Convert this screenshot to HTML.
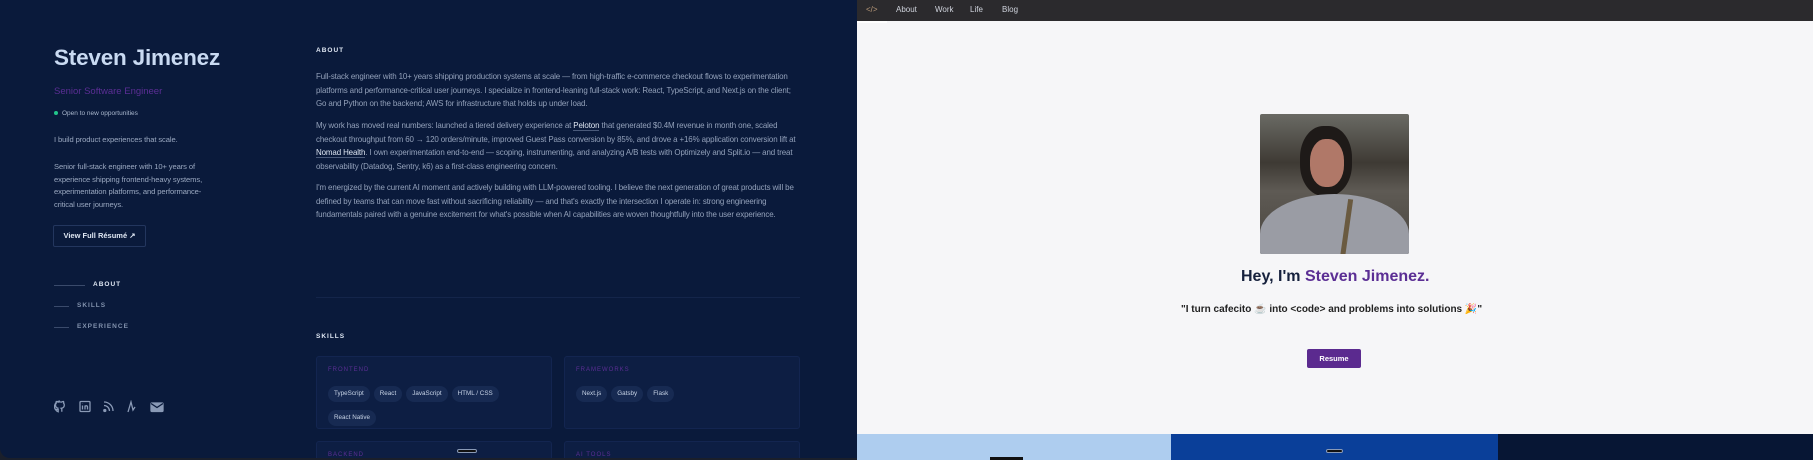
<!DOCTYPE html>
<html><head><meta charset="utf-8"><style>
*{margin:0;padding:0;box-sizing:border-box}
body{width:1813px;height:460px;overflow:hidden;background:#1a1f2b;font-family:"Liberation Sans",sans-serif;position:relative}
.l{position:absolute;left:0;top:0;width:857px;height:458px;background:#0a1a3b;border-bottom-left-radius:10px;overflow:hidden}
.a{position:absolute;white-space:nowrap}
.name{left:54px;top:45px;font-size:22.5px;font-weight:bold;color:#c9daf2;letter-spacing:-0.2px}
.sub{left:54px;top:86px;font-size:9.5px;color:#5b2e94}
.open{left:54px;top:110px;font-size:6.5px;color:#a8b6cc}
.open i{display:inline-block;width:4px;height:4px;border-radius:50%;background:#22c58b;margin-right:4px;vertical-align:middle}
.t{color:#9aa8c0;font-size:7.6px;letter-spacing:-0.1px}
.btn{left:53px;top:225px;width:93px;height:22px;border:1px solid #23365e;border-radius:2px;color:#dfe7f3;font-size:7.5px;font-weight:bold;text-align:center;line-height:20px}
.nav{font-size:6.5px;font-weight:bold;letter-spacing:1px;color:#8292ad}
.ln{position:absolute;height:1px;background:#3a4a6b}
.h{font-size:6.5px;font-weight:bold;letter-spacing:1px;color:#dfe7f3}
.p{left:316px;white-space:nowrap;font-size:7.95px;line-height:13.6px;color:#93a1ba;letter-spacing:-0.12px}
.p b{color:#dfe7f3;font-weight:normal;border-bottom:1px solid #4a5a7a}
.card{position:absolute;background:#0d1e43;border:1px solid #132550;border-radius:3px}
.lab{position:absolute;left:11px;top:10px;font-size:6px;letter-spacing:1px;color:#5b2e94}
.pill{display:inline-block;height:16px;line-height:16px;padding:0 6px;border-radius:8px;background:#172a52;color:#c7d3e6;font-size:6.3px;margin:0 4px 4px 0}
.pills{position:absolute;left:11px;top:25px;width:220px}
.r{position:absolute;left:857px;top:0;width:956px;height:434px;background:#f6f6f8}
.bar{position:absolute;left:857px;top:0;width:956px;height:21px;background:#2b2a2d}
.bar span{position:absolute;top:5px;font-size:8px;color:#cfd3dc}
</style></head><body>
<div class="l">
<div class="a name">Steven Jimenez</div>
<div class="a sub">Senior Software Engineer</div>
<div class="a open"><i></i>Open to new opportunities</div>
<div class="a t" style="left:54px;top:135px">I build product experiences that scale.</div>
<div class="a t" style="left:54px;top:161px;line-height:12.7px;white-space:normal;width:160px">Senior full-stack engineer with 10+ years of experience shipping frontend-heavy systems, experimentation platforms, and performance-critical user journeys.</div>
<div class="a btn">View Full Résumé ↗</div>
<div class="ln" style="left:54px;top:285px;width:31px"></div><div class="a nav" style="left:93px;top:281px;color:#dfe7f3">ABOUT</div>
<div class="ln" style="left:54px;top:306px;width:15px"></div><div class="a nav" style="left:77px;top:302px">SKILLS</div>
<div class="ln" style="left:54px;top:327px;width:15px"></div><div class="a nav" style="left:77px;top:323px">EXPERIENCE</div>
<svg class="a" style="left:54px;top:400px" width="115" height="14" viewBox="0 0 115 14" fill="none" stroke="#8a9ab6" stroke-width="1.3">
<path d="M6 1a5.5 5.5 0 0 0-1.8 10.7V9.5c-1.5.3-1.8-.7-1.8-.7M7.8 11.7V9.5c0-.7-.2-1-.5-1.2 1.6-.2 3-.8 3-3.3 0-.7-.2-1.3-.7-1.7.1-.3.2-1-.1-1.8 0 0-.6-.2-1.9.6a6 6 0 0 0-3.4 0C2.9 1.3 2.3 1.5 2.3 1.5c-.3.8-.2 1.5-.1 1.8-.5.4-.7 1-.7 1.7 0 2.5 1.4 3.1 3 3.3"/>
<rect x="26" y="1.5" width="10" height="10" rx="1"/><path d="M28.5 5.5v4M28.5 3.6v.3M31 9.5V5.5M31 7c0-1.5 2.5-1.8 2.5 0v2.5"/>
<path d="M50 2a9 9 0 0 1 9 9M50 5.5a5.5 5.5 0 0 1 5.5 5.5"/><circle cx="50.8" cy="10.5" r="1" fill="#8a9ab6"/>
<path d="M74 12l3-10 2 8 2-3"/>
<rect x="97" y="3" width="12" height="8.5" rx="1" fill="#8a9ab6"/><path d="M97 3.5l6 4 6-4" stroke="#0a1a3b"/>
</svg>
<div class="a h" style="left:316px;top:47px">ABOUT</div>
<div class="a p" style="top:70px">Full-stack engineer with 10+ years shipping production systems at scale — from high-traffic e-commerce checkout flows to experimentation<br>platforms and performance-critical user journeys. I specialize in frontend-leaning full-stack work: React, TypeScript, and Next.js on the client;<br>Go and Python on the backend; AWS for infrastructure that holds up under load.</div>
<div class="a p" style="top:119px">My work has moved real numbers: launched a tiered delivery experience at <b>Peloton</b> that generated $0.4M revenue in month one, scaled<br>checkout throughput from 60 → 120 orders/minute, improved Guest Pass conversion by 85%, and drove a +16% application conversion lift at<br><b>Nomad Health</b>. I own experimentation end-to-end — scoping, instrumenting, and analyzing A/B tests with Optimizely and Split.io — and treat<br>observability (Datadog, Sentry, k6) as a first-class engineering concern.</div>
<div class="a p" style="top:181px">I'm energized by the current AI moment and actively building with LLM-powered tooling. I believe the next generation of great products will be<br>defined by teams that can move fast without sacrificing reliability — and that's exactly the intersection I operate in: strong engineering<br>fundamentals paired with a genuine excitement for what's possible when AI capabilities are woven thoughtfully into the user experience.</div>
<div class="ln" style="left:316px;top:297px;width:484px;background:#14254a"></div>
<div class="a h" style="left:316px;top:333px">SKILLS</div>
<div class="card" style="left:316px;top:356px;width:236px;height:73px"><div class="lab">FRONTEND</div><div class="pills"><span class="pill">TypeScript</span><span class="pill">React</span><span class="pill">JavaScript</span><span class="pill">HTML / CSS</span><span class="pill">React Native</span></div></div>
<div class="card" style="left:564px;top:356px;width:236px;height:73px"><div class="lab">FRAMEWORKS</div><div class="pills"><span class="pill">Next.js</span><span class="pill">Gatsby</span><span class="pill">Flask</span></div></div>
<div class="card" style="left:316px;top:441px;width:236px;height:40px"><div class="lab">BACKEND</div></div>
<div class="card" style="left:564px;top:441px;width:236px;height:40px"><div class="lab">AI TOOLS</div></div>
<div class="a" style="left:457px;top:449px;width:20px;height:4px;border:1px solid #8a9ab6;border-radius:2px;background:#111"></div>
</div>
<div class="r"></div>
<div class="bar"><span style="left:9px;color:#b99a7a">&lt;/&gt;</span><span style="left:39px">About</span><span style="left:78px">Work</span><span style="left:113px">Life</span><span style="left:145px">Blog</span></div>
<div class="a" style="left:857px;top:21px;width:30px;height:2px;background:#fff"></div>
<div class="a" style="left:1260px;top:114px;width:149px;height:140px;border-radius:2px;overflow:hidden;background:linear-gradient(180deg,#6a6a64 0,#3e3a34 35%,#5e5a54 55%,#4a4640 100%)">
<div style="position:absolute;left:40px;top:12px;width:52px;height:70px;border-radius:45%;background:#1e1a18"></div>
<div style="position:absolute;left:50px;top:25px;width:34px;height:48px;border-radius:45%;background:#b07868"></div>
<div style="position:absolute;left:0;top:80px;width:149px;height:80px;border-radius:50% 50% 0 0;background:#9a9ca4"></div>
<div style="position:absolute;left:84px;top:85px;width:5px;height:60px;background:#6a5a40;transform:rotate(8deg)"></div>
</div>
<div class="a" style="left:1241px;top:268px;font-size:16px;font-weight:bold;color:#16213d">Hey, I'm <span style="color:#5b2e94">Steven Jimenez.</span></div>
<div class="a" style="left:1181px;top:304px;font-size:10px;font-weight:bold;color:#222">"I turn cafecito ☕ into &lt;code&gt; and problems into solutions 🎉"</div>
<div class="a" style="left:1307px;top:349px;width:54px;height:19px;background:#5b2a8f;border-radius:2px;color:#fff;font-size:7.5px;font-weight:bold;text-align:center;line-height:19px">Resume</div>
<div class="a" style="left:857px;top:434px;width:314px;height:26px;background:#aecdef"></div>
<div class="a" style="left:1171px;top:434px;width:327px;height:26px;background:#0a3f99"></div>
<div class="a" style="left:1498px;top:434px;width:315px;height:26px;background:#071634"></div>
<div class="a" style="left:1326px;top:449px;width:17px;height:4px;border:1px solid #8a9ab6;border-radius:2px;background:#111"></div>
<div class="a" style="left:990px;top:457px;width:33px;height:3px;background:#111"></div>
</body></html>
